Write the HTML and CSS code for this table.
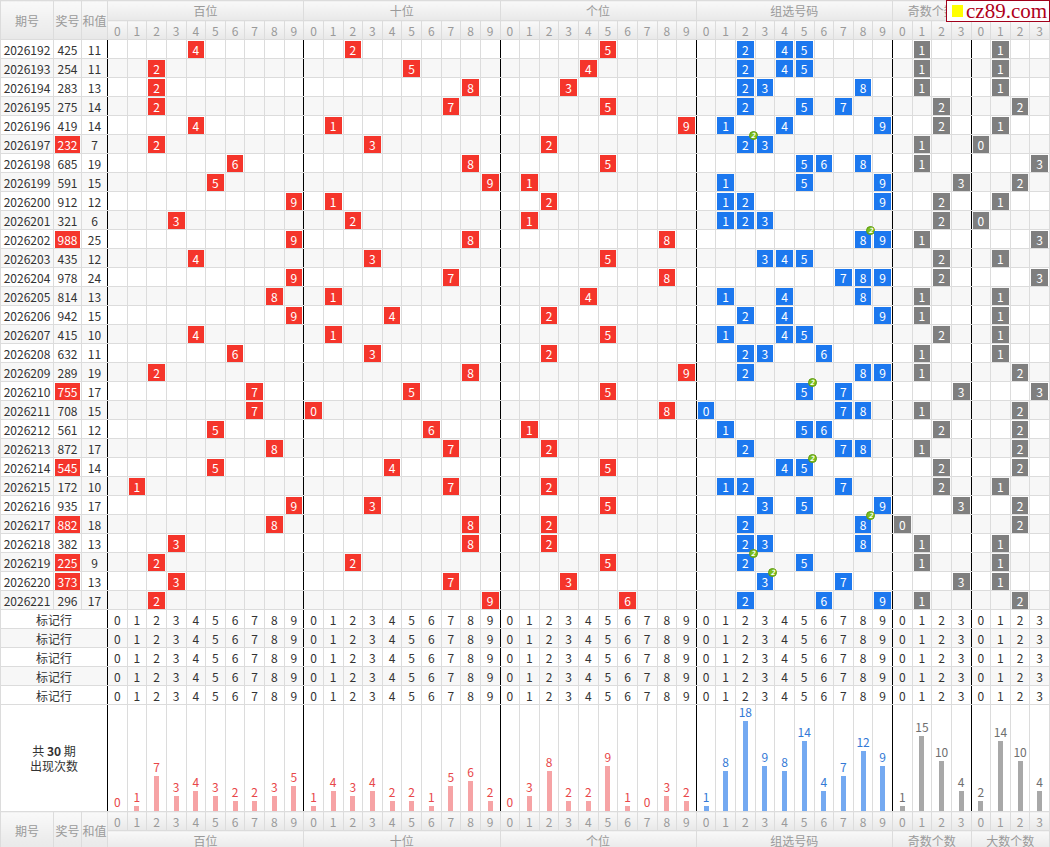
FILE: index.html
```html
<!DOCTYPE html>
<html lang="zh-CN">
<head>
<meta charset="utf-8">
<title>走势图</title>
<link rel="stylesheet" href="styles.css">
</head>
<body>
<div class="wrap">
  <table class="chart" id="chart"></table>
  <div class="logo"><span class="logo-sq"></span><span class="logo-txt">cz89.com</span></div>
</div>
<script src="script.js"></script>
</body>
</html>
```

FILE: styles.css
```css
* { box-sizing: border-box; }
body {
  margin: 0;
  font-family: "Noto Sans CJK SC", "Liberation Sans", sans-serif;
  font-size: 12px;
  color: #333;
  background: #fff;
}
.wrap { position: relative; width: 1050px; }
.chart {
  width: 1050px;
  border-collapse: collapse;
  table-layout: fixed;
}
.w-id { width: 53px; }
.w-num { width: 28px; }
.w-sum { width: 26px; }
.chart td, .chart th {
  border: 1px solid #dcdcdc;
  padding: 0;
  text-align: center;
  vertical-align: middle;
  font-weight: normal;
  white-space: nowrap;
  line-height: 17px;
}
.chart thead th, .chart tfoot th {
  background: linear-gradient(#f9f9f9, #e8e8e8);
  color: #9a9a9a;
}
.h1 { height: 20px; }
.h2, .row, .mark, .f1, .f2 { height: 19px; }
.alt td { background: #f7f7f7; }
.chart td.gl { border-left: 1px solid #000; }
.chart td.gr { border-right: 1px solid #000; }
.b {
  display: block;
  position: relative;
  height: 17px;
  line-height: 17px;
  margin: 0 1px;
  color: #fff;
}
.red { background: #f5352b; }
.blue { background: #1c78ef; }
.grey { background: #7f7f7f; }
.badge {
  position: absolute;
  top: -5px;
  right: -4px;
  width: 9px;
  height: 9px;
  border-radius: 50%;
  background: #7cbf1e;
  border: 1px solid #5e9a12;
  color: #fff;
  font-size: 7px;
  line-height: 7px;
  font-weight: bold;
  text-align: center;
}
.chartrow { height: 105px; }
.chartrow td { vertical-align: bottom; }
.chartrow td.sum { vertical-align: middle; line-height: 15px; color: #333; }
.chartrow td.sum b { font-weight: bold; }
.cnt {
  display: flex;
  flex-direction: column;
  align-items: center;
}
.cnt .n { line-height: 14px; margin-bottom: 2px; }
.cnt .bar { width: 5px; }
.c-r .n { color: #e8474a; }
.c-r .bar { background: #f6a3a5; }
.c-b .n { color: #3479d6; }
.c-b .bar { background: #74a9f1; }
.c-k .n { color: #6f6f6f; }
.c-k .bar { background: #a8a8a8; }
.logo {
  position: absolute;
  top: 0;
  right: 0;
  width: 104px;
  height: 22px;
  background: #fff;
  border: 1px solid #a0001a;
  display: flex;
  align-items: center;
}
.logo-sq {
  width: 11px;
  height: 12px;
  margin-left: 5px;
  background: #ffff00;
}
.logo-txt {
  margin-left: 3px;
  font-family: "Liberation Serif", serif;
  font-size: 21px;
  line-height: 20px;
  color: #b0001a;
}
```

FILE: script.js
```js
(function () {
  var data = [
    ["2026192", "425"], ["2026193", "254"], ["2026194", "283"], ["2026195", "275"], ["2026196", "419"],
    ["2026197", "232"], ["2026198", "685"], ["2026199", "591"], ["2026200", "912"], ["2026201", "321"],
    ["2026202", "988"], ["2026203", "435"], ["2026204", "978"], ["2026205", "814"], ["2026206", "942"],
    ["2026207", "415"], ["2026208", "632"], ["2026209", "289"], ["2026210", "755"], ["2026211", "708"],
    ["2026212", "561"], ["2026213", "872"], ["2026214", "545"], ["2026215", "172"], ["2026216", "935"],
    ["2026217", "882"], ["2026218", "382"], ["2026219", "225"], ["2026220", "373"], ["2026221", "296"]
  ];
  var groups = [["百位", 10], ["十位", 10], ["个位", 10], ["组选号码", 10], ["奇数个数", 4], ["大数个数", 4]];
  var colorCls = ["red", "red", "red", "blue", "grey", "grey"];
  var chartCls = ["c-r", "c-r", "c-r", "c-b", "c-k", "c-k"];
  var cols = [];
  groups.forEach(function (g, gi) {
    for (var d = 0; d < g[1]; d++) cols.push({ g: gi, d: d, first: d === 0, last: d === g[1] - 1 });
  });
  var counts = cols.map(function () { return 0; });

  function sep(c) {
    var s = [];
    if (c.first) s.push("gl");
    if (c.last && c.g < groups.length - 1) s.push("gr");
    return s.length ? ' class="' + s.join(" ") + '"' : "";
  }

  var h = "";
  h += '<colgroup><col class="w-id"><col class="w-num"><col class="w-sum">';
  cols.forEach(function () { h += "<col>"; });
  h += "</colgroup>";

  h += '<thead><tr class="h1"><th rowspan="2">期号</th><th rowspan="2">奖号</th><th rowspan="2">和值</th>';
  groups.forEach(function (g) { h += '<th colspan="' + g[1] + '">' + g[0] + "</th>"; });
  h += '</tr><tr class="h2">';
  cols.forEach(function (c) { h += "<th>" + c.d + "</th>"; });
  h += "</tr></thead><tbody>";

  data.forEach(function (row, ri) {
    var ds = row[1].split("").map(Number);
    var sum = ds[0] + ds[1] + ds[2];
    var freq = {};
    ds.forEach(function (d) { freq[d] = (freq[d] || 0) + 1; });
    var pair = Object.keys(freq).length < 3;
    var odd = ds.filter(function (d) { return d % 2 === 1; }).length;
    var big = ds.filter(function (d) { return d >= 5; }).length;
    h += '<tr class="row' + (ri % 2 ? " alt" : "") + '">';
    h += "<td>" + row[0] + "</td>";
    h += "<td>" + (pair ? '<span class="b red">' + row[1] + "</span>" : row[1]) + "</td>";
    h += '<td class="gr">' + sum + "</td>";
    cols.forEach(function (c, ci) {
      var hit = false, badge = "", add = 1;
      if (c.g < 3) hit = ds[c.g] === c.d;
      else if (c.g === 3) {
        hit = !!freq[c.d];
        add = freq[c.d] || 0;
        if (freq[c.d] > 1) badge = '<i class="badge">' + freq[c.d] + "</i>";
      }
      else if (c.g === 4) hit = odd === c.d;
      else hit = big === c.d;
      var inner = "";
      if (hit) { counts[ci] += add; inner = '<span class="b ' + colorCls[c.g] + '">' + c.d + badge + "</span>"; }
      h += "<td" + sep(c) + ">" + inner + "</td>";
    });
    h += "</tr>";
  });

  for (var m = 0; m < 5; m++) {
    h += '<tr class="mark' + (m % 2 ? " alt" : "") + '"><td colspan="3" class="gr">标记行</td>';
    cols.forEach(function (c) { h += "<td" + sep(c) + ">" + c.d + "</td>"; });
    h += "</tr>";
  }

  h += '<tr class="chartrow"><td colspan="3" class="sum gr">共 <b>' + data.length + "</b> 期<br>出现次数</td>";
  cols.forEach(function (c, ci) {
    var n = counts[ci];
    var bar = n ? '<div class="bar" style="height:' + (n * 5) + 'px"></div>' : "";
    h += "<td" + sep(c) + '><div class="cnt ' + chartCls[c.g] + '"><span class="n">' + n + "</span>" + bar + "</div></td>";
  });
  h += "</tr></tbody>";

  h += '<tfoot><tr class="f1"><th rowspan="2">期号</th><th rowspan="2">奖号</th><th rowspan="2">和值</th>';
  cols.forEach(function (c) { h += "<th>" + c.d + "</th>"; });
  h += '</tr><tr class="f2">';
  groups.forEach(function (g) { h += '<th colspan="' + g[1] + '">' + g[0] + "</th>"; });
  h += "</tr></tfoot>";

  document.getElementById("chart").innerHTML = h;
})();
```
